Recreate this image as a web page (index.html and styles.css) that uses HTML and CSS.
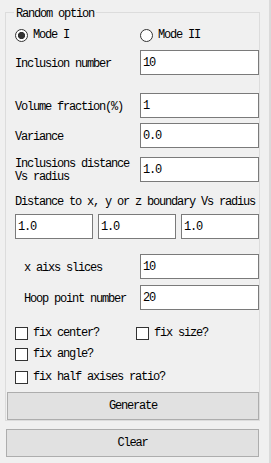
FILE: index.html
```html
<!DOCTYPE html>
<html>
<head>
<meta charset="utf-8">
<link rel="stylesheet" href="styles.css">
</head>
<body>
<div class="window">
  <fieldset class="group">
    <legend class="group-title">Random option</legend>
    <div class="radios">
      <label class="choice"><span class="radio checked"></span>Mode I</label>
      <label class="choice"><span class="radio"></span>Mode II</label>
    </div>
    <div class="field r-incl"><span class="lbl">Inclusion number</span><input class="txt" value="10"></div>
    <div class="field r-vol"><span class="lbl">Volume fraction(%)</span><input class="txt" value="1"></div>
    <div class="field r-var"><span class="lbl">Variance</span><input class="txt" value="0.0"></div>
    <div class="field r-dist"><span class="lbl two">Inclusions distance<br>Vs radius</span><input class="txt" value="1.0"></div>
    <div class="dist-lbl">Distance to x, y or z boundary Vs radius</div>
    <div class="triple">
      <input class="txt" value="1.0">
      <input class="txt" value="1.0">
      <input class="txt" value="1.0">
    </div>
    <div class="field r-slice"><span class="lbl indent">x aixs slices</span><input class="txt" value="10"></div>
    <div class="field r-hoop"><span class="lbl indent">Hoop point number</span><input class="txt" value="20"></div>
    <div class="checks c1">
      <label class="check first"><span class="box"></span>fix center?</label>
      <label class="check"><span class="box"></span>fix size?</label>
    </div>
    <div class="checks c2">
      <label class="check"><span class="box"></span>fix angle?</label>
    </div>
    <div class="checks c3">
      <label class="check"><span class="box"></span>fix half axises ratio?</label>
    </div>
    <button class="btn gen">Generate</button>
  </fieldset>
  <button class="btn clear">Clear</button>
</div>
</body>
</html>
```

FILE: styles.css
```css
* { box-sizing: border-box; }
html, body { margin: 0; padding: 0; }
body {
  background: #f0f0f0;
  font-family: "Liberation Mono", "DejaVu Sans Mono", monospace;
  font-size: 12px;
  letter-spacing: -1.2px;
  color: #000;
  width: 271px;
  height: 463px;
  overflow: hidden;
}
.window {
  width: 271px;
  height: 463px;
  border-right: 2px solid #dadada;
  padding: 3px 0 0 5px;
}
.group {
  margin: 0;
  width: 255px;
  min-width: 0;
  border: 1px solid #dcdcdc;
  padding: 0 0 0 9px;
}
.group-title {
  padding: 4px 2px 0;
  margin-left: -1px;
  line-height: 15px;
}
.radios {
  display: grid;
  grid-template-columns: 125px 1fr;
  margin-top: 7px;
  height: 13px;
}
.choice, .check {
  display: flex;
  align-items: center;
  gap: 5px;
  height: 13px;
  line-height: 13px;
  white-space: nowrap;
}
.radio {
  width: 13px;
  height: 13px;
  border: 1px solid #333;
  border-radius: 50%;
  background: #fff;
  flex: none;
}
.radio.checked {
  background: radial-gradient(circle, #333 0 3.3px, #fff 3.9px);
}
.field {
  display: grid;
  grid-template-columns: 125px 119px;
  align-items: center;
  height: 25px;
}
.lbl {
  padding-top: 3px;
  line-height: 14px;
  white-space: nowrap;
}
.lbl.two { line-height: 13px; }
.lbl.indent { padding-left: 9px; }
.txt {
  display: block;
  width: 119px;
  height: 25px;
  margin: 0;
  padding: 0 0 0 2px;
  border: 1px solid #7a7a7a;
  background: #fff;
  font: inherit;
  letter-spacing: inherit;
  color: #000;
  outline: none;
}
.r-incl { margin-top: 8px; }
.r-vol { margin-top: 18px; }
.r-var { margin-top: 5px; }
.r-dist { margin-top: 7px; }
.dist-lbl {
  margin-top: 15px;
  line-height: 14px;
  white-space: nowrap;
}
.triple {
  margin-top: 5px;
  display: grid;
  grid-template-columns: repeat(3, 78px);
  gap: 5px;
}
.triple .txt { width: 78px; }
.r-slice { margin-top: 15px; }
.r-hoop { margin-top: 6px; }
.checks { display: flex; height: 13px; }
.check.first { width: 121px; }
.box {
  width: 13px;
  height: 13px;
  border: 1px solid #333;
  background: #fff;
  flex: none;
}
.c1 { margin-top: 17px; }
.c2 { margin-top: 8px; }
.c3 { margin-top: 10px; }
.btn {
  display: block;
  height: 28px;
  border: 1px solid #adadad;
  background: #e1e1e1;
  font: inherit;
  letter-spacing: inherit;
  color: #000;
  padding: 0;
}
.gen {
  margin: 8px 0 0 -8px;
  width: 252px;
}
.clear {
  margin: 8px 0 0 1px;
  width: 253px;
}
```
